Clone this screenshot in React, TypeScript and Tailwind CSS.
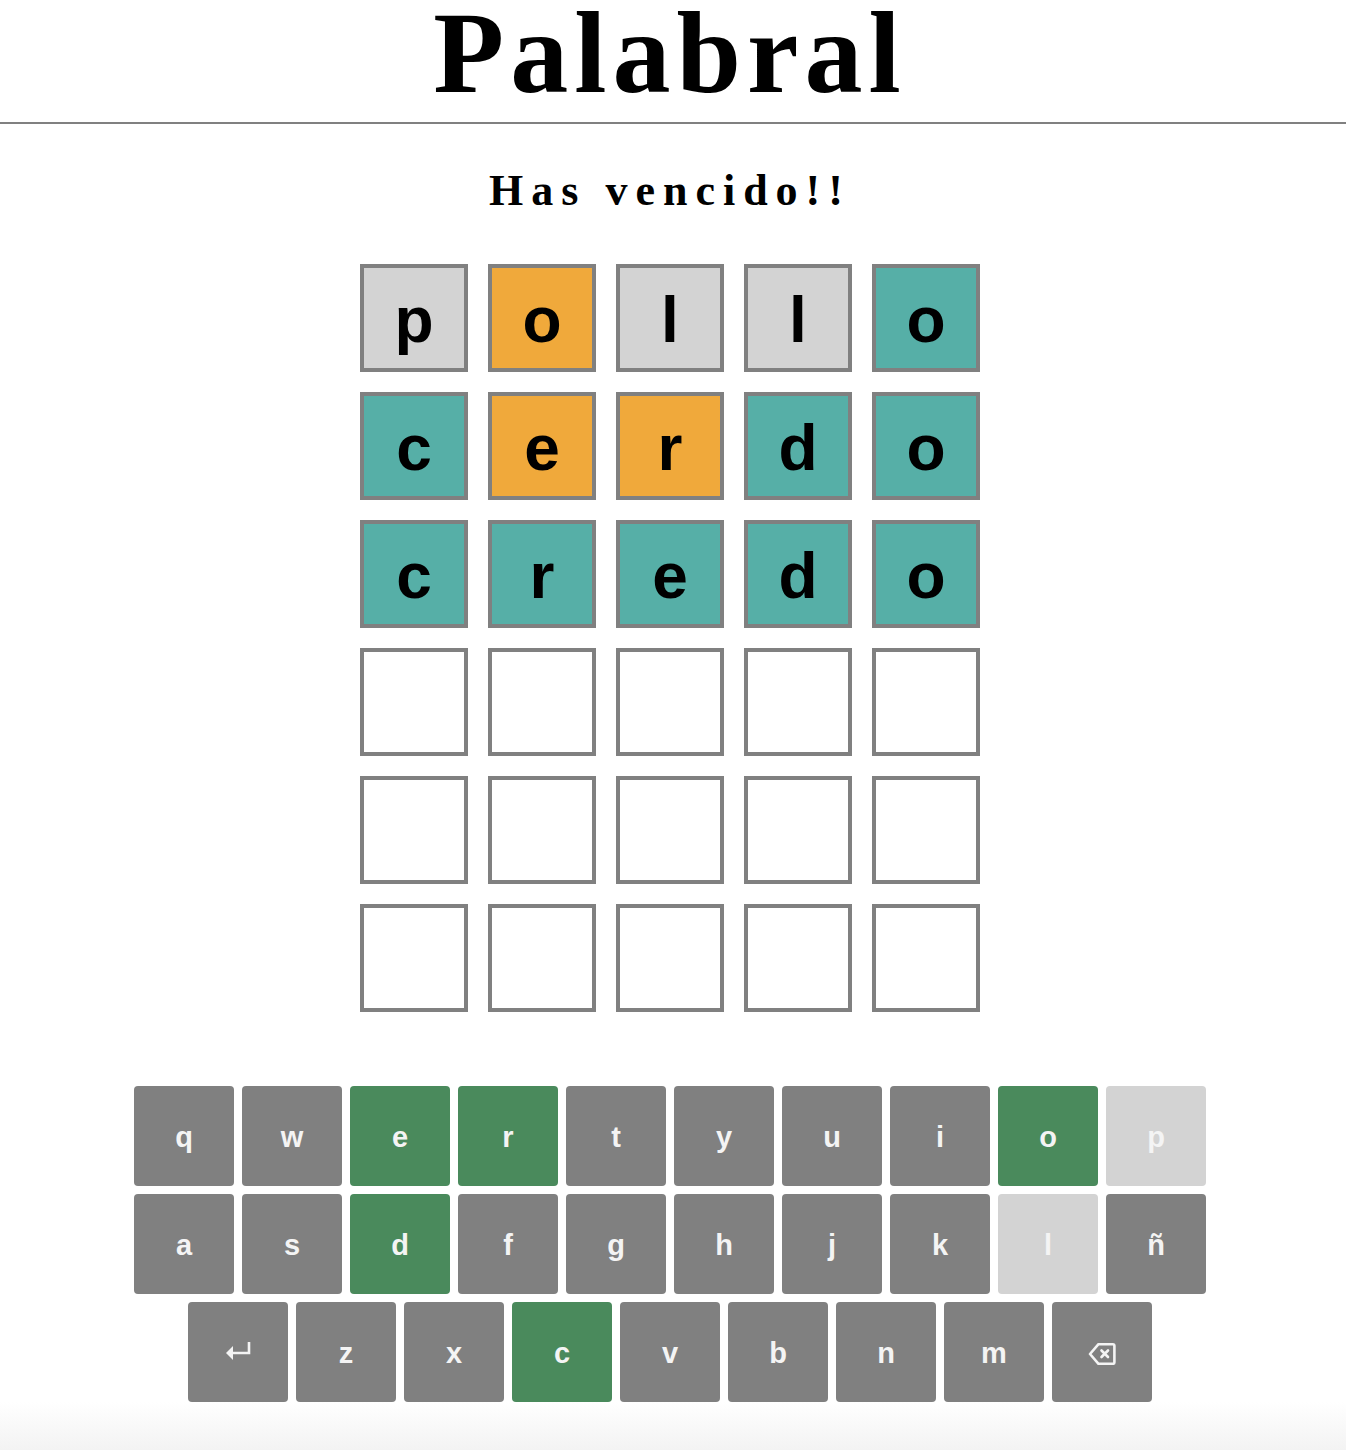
type TileState = 'absent' | 'present' | 'correct' | 'empty';

const tileColors: Record<TileState, string> = {
  absent: 'bg-[#d3d3d3]',
  present: 'bg-[#f0a93b]',
  correct: 'bg-[#56afa7]',
  empty: 'bg-white',
};

const guesses: { word: string; states: TileState[] }[] = [
  { word: 'pollo', states: ['absent', 'present', 'absent', 'absent', 'correct'] },
  { word: 'cerdo', states: ['correct', 'present', 'present', 'correct', 'correct'] },
  { word: 'credo', states: ['correct', 'correct', 'correct', 'correct', 'correct'] },
];

type KeyState = 'used' | 'correct' | 'absent';

const keyColors: Record<KeyState, string> = {
  used: 'bg-[#808080]',
  correct: 'bg-[#4a8a5c]',
  absent: 'bg-[#d3d3d3]',
};

const keyRows: [string, KeyState][][] = [
  [
    ['q', 'used'], ['w', 'used'], ['e', 'correct'], ['r', 'correct'], ['t', 'used'],
    ['y', 'used'], ['u', 'used'], ['i', 'used'], ['o', 'correct'], ['p', 'absent'],
  ],
  [
    ['a', 'used'], ['s', 'used'], ['d', 'correct'], ['f', 'used'], ['g', 'used'],
    ['h', 'used'], ['j', 'used'], ['k', 'used'], ['l', 'absent'], ['ñ', 'used'],
  ],
  [
    ['enter', 'used'], ['z', 'used'], ['x', 'used'], ['c', 'correct'], ['v', 'used'],
    ['b', 'used'], ['n', 'used'], ['m', 'used'], ['back', 'used'],
  ],
];

function EnterIcon() {
  return (
    <svg width="26" height="22" viewBox="0 0 26 22" className="text-[#f4f4f4]">
      <path d="M24 0 V11 H7" fill="none" stroke="currentColor" strokeWidth="2.6" />
      <path d="M1 11 L8 4 L8 18 Z" fill="currentColor" />
    </svg>
  );
}

function BackspaceIcon() {
  return (
    <svg width="28" height="24" viewBox="0 0 28 24" className="text-[#f4f4f4]">
      <path
        d="M10.5 3.2 H24.8 a1.6 1.6 0 0 1 1.6 1.6 V21.2 a1.6 1.6 0 0 1 -1.6 1.6 H10.5 L2 13 Z"
        fill="none"
        stroke="currentColor"
        strokeWidth="2.6"
        strokeLinejoin="round"
      />
      <path d="M13.5 9.5 L20 16 M20 9.5 L13.5 16" stroke="currentColor" strokeWidth="2.6" strokeLinecap="round" />
    </svg>
  );
}

function Tile({ letter, state }: { letter: string; state: TileState }) {
  return (
    <div
      className={`w-[108px] h-[108px] border-4 border-[#808080] flex items-center justify-center pt-[4px] text-[64px] leading-none font-bold text-black ${tileColors[state]}`}
    >
      {letter}
    </div>
  );
}

export default function App() {
  const rows = Array.from({ length: 6 }, (_, i) => guesses[i] ?? { word: '     ', states: Array(5).fill('empty') as TileState[] });

  return (
    <div className="h-[1450px] flex flex-col bg-white font-['Liberation_Sans',Arial,sans-serif]">
      {/* Header */}
      <header className="border-b-2 border-[#808080]">
        <div className="w-[1340px] pt-[2px] pb-[18px]">
          <h1 className="text-center font-['Liberation_Serif','Times_New_Roman',serif] font-bold text-[116px] leading-[102px] tracking-[6px] text-black">
            Palabral
          </h1>
        </div>
      </header>

      <main className="w-[1340px] flex flex-col items-center">
        <h2 className="mt-[45px] font-['Liberation_Serif','Times_New_Roman',serif] font-bold text-[44px] leading-none tracking-[8px] text-black">
          Has vencido!!
        </h2>

        {/* Board */}
        <div className="mt-[51px] grid grid-cols-5 gap-5">
          {rows.map((row, r) =>
            row.states.map((s, c) => <Tile key={`${r}-${c}`} letter={row.word[c].trim()} state={s} />)
          )}
        </div>

        {/* Keyboard */}
        <div className="mt-[74px] flex flex-col items-center gap-2">
          {keyRows.map((row, i) => (
            <div key={i} className="flex gap-2">
              {row.map(([k, s]) => (
                <button
                  key={k}
                  className={`w-[100px] h-[100px] rounded-[4px] flex items-center justify-center pt-[2px] text-[29px] leading-none font-bold text-[#f4f4f4] ${keyColors[s]}`}
                >
                  {k === 'enter' ? <EnterIcon /> : k === 'back' ? <BackspaceIcon /> : k}
                </button>
              ))}
            </div>
          ))}
        </div>
      </main>

      <div className="flex-1 bg-gradient-to-b from-white to-[#f3f3f3]" />
    </div>
  );
}
